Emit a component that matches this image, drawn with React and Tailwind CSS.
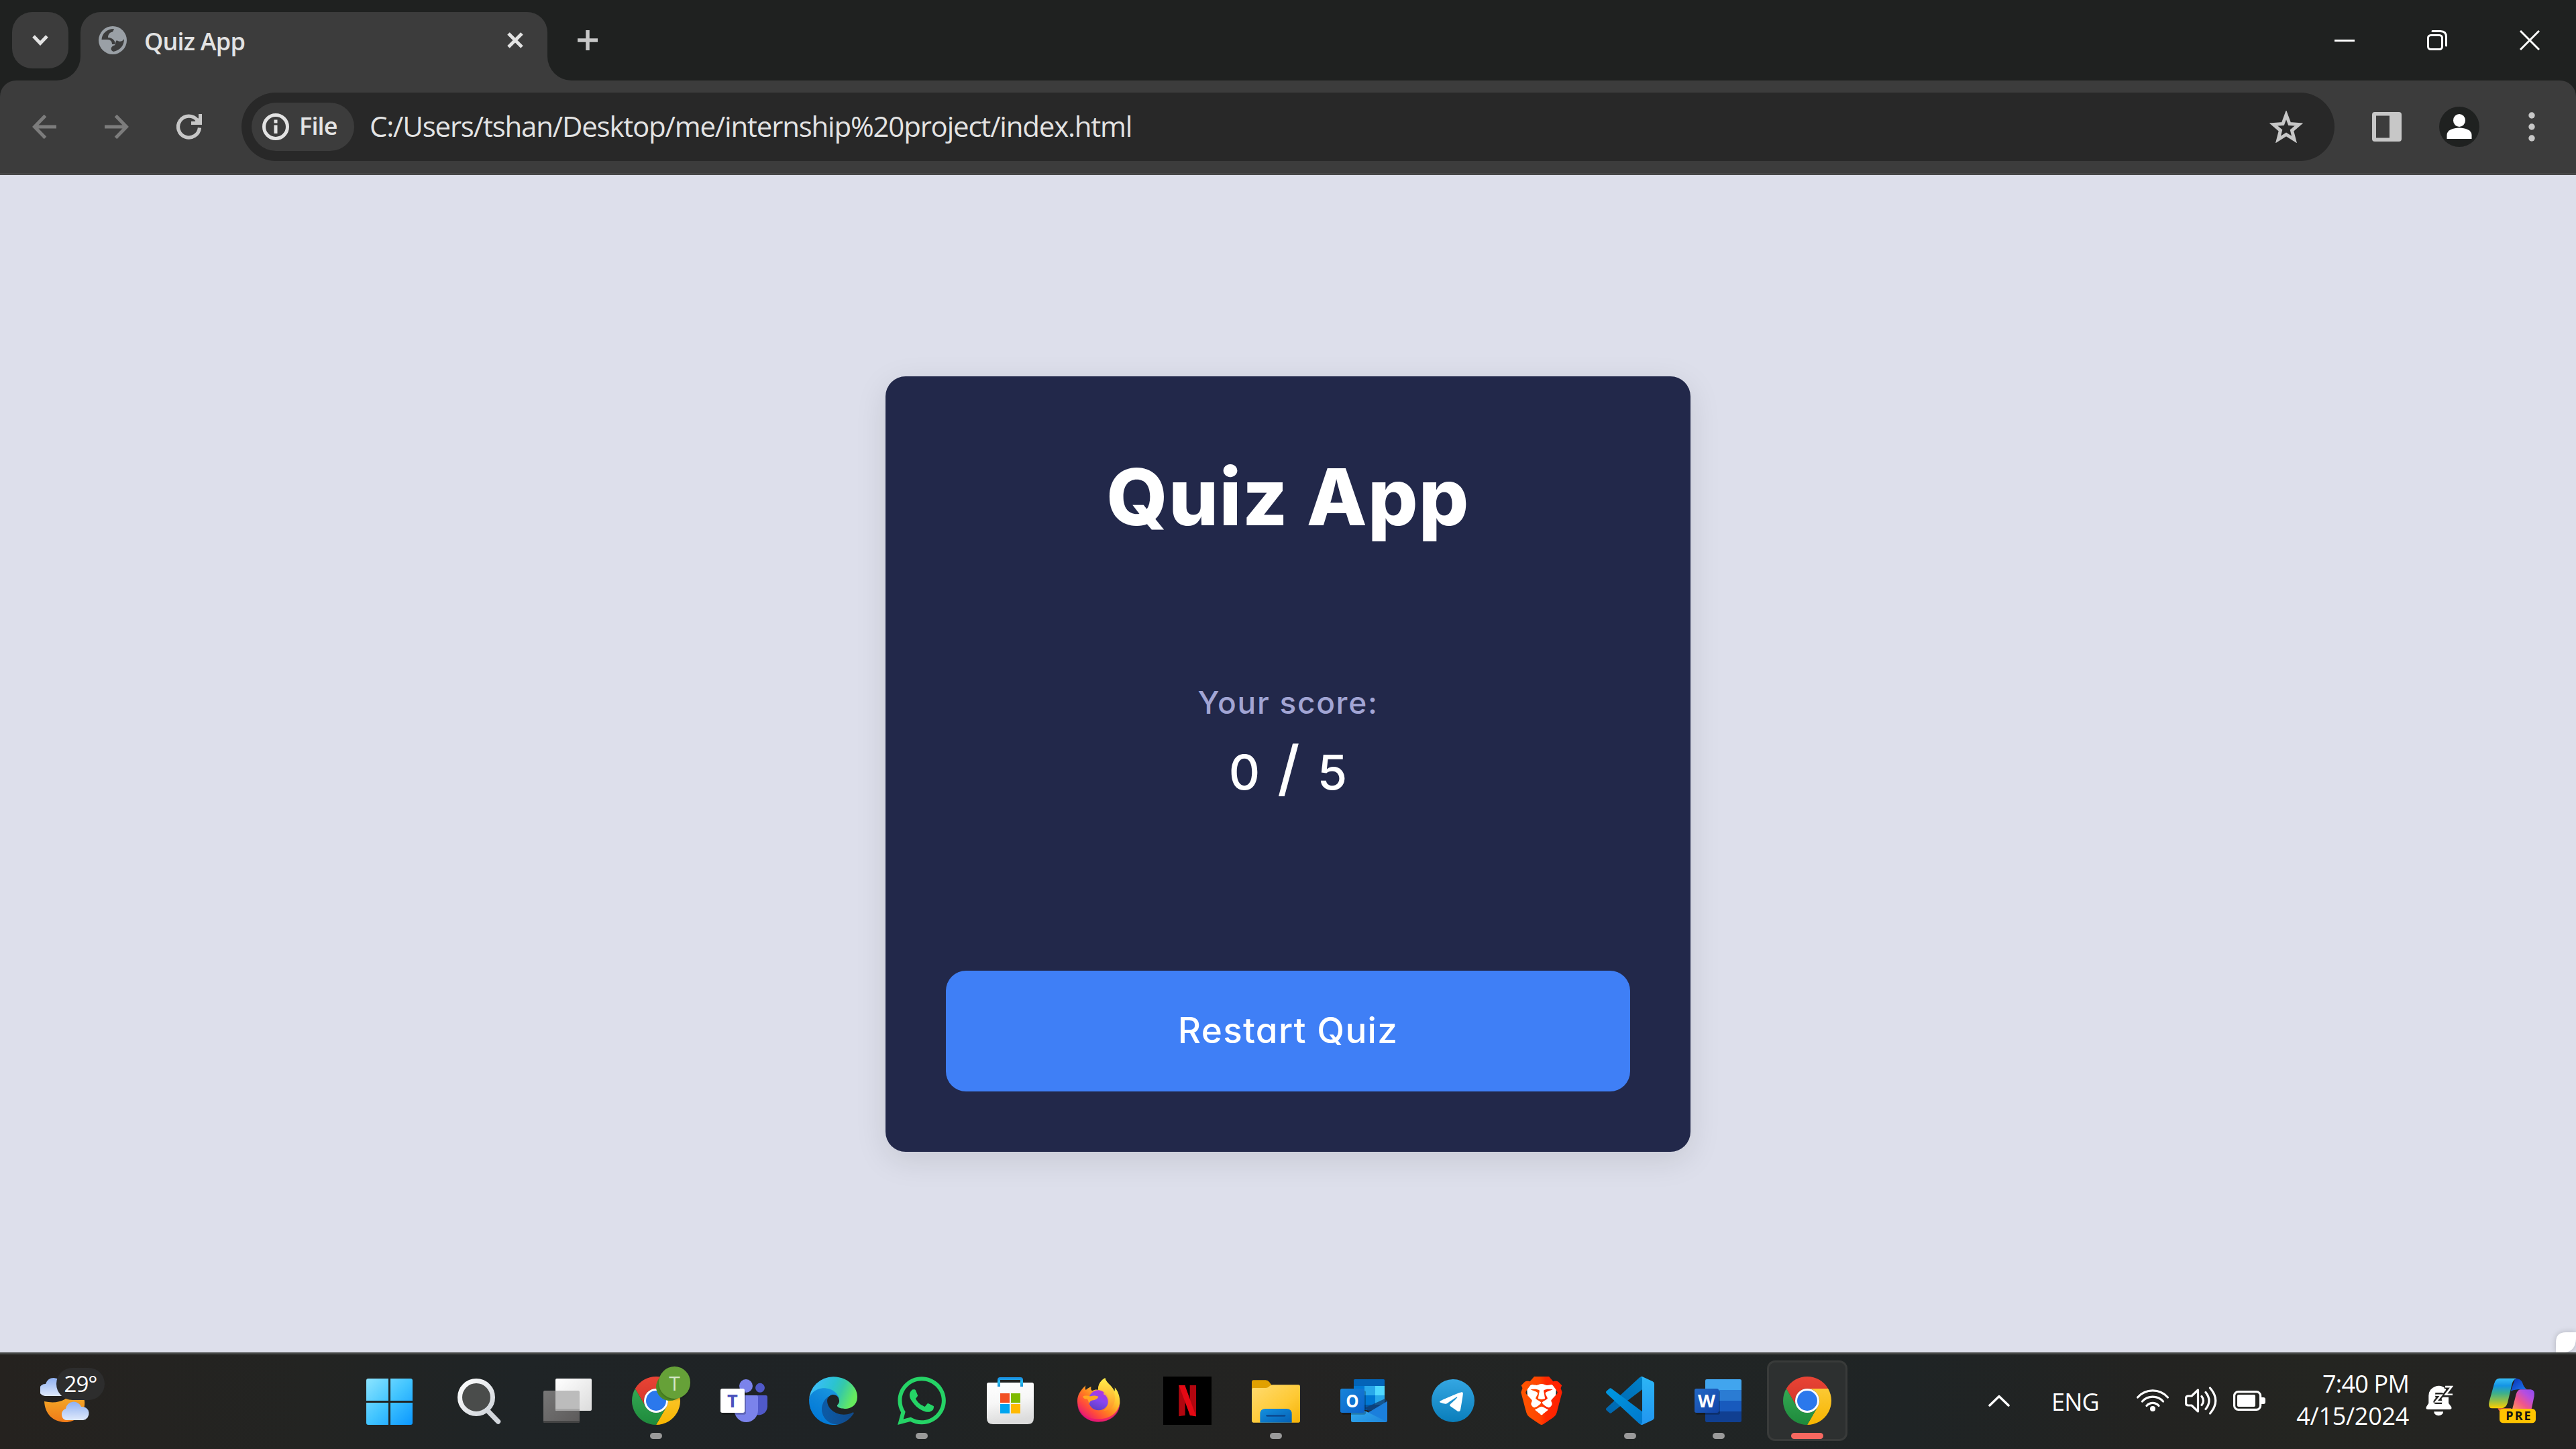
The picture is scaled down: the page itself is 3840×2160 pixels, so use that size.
import React from "react";
import { SiBrave, SiTelegram } from "react-icons/si";
import { FaWhatsapp } from "react-icons/fa";

function ChromeIcon() {
  return (
    <svg viewBox="0 0 216 216" className="size-[72px]">
      <defs>
        <linearGradient id="chR" x1="0" y1="0" x2="0" y2="1"><stop offset="0" stopColor="#e94435" /><stop offset="1" stopColor="#d3352a" /></linearGradient>
        <linearGradient id="chY" x1="0" y1="0" x2="0" y2="1"><stop offset="0" stopColor="#fbc934" /><stop offset="1" stopColor="#f8b500" /></linearGradient>
        <linearGradient id="chG" x1="0" y1="0" x2="0" y2="1"><stop offset="0" stopColor="#34a853" /><stop offset="1" stopColor="#1e8a3c" /></linearGradient>
      </defs>
      <path fill="url(#chR)" d="M14.500 54A108 108 0 0 1 201.500 54L108 54A54 54 0 0 0 61.200 135Z" />
      <path fill="url(#chY)" d="M201.500 54A108 108 0 0 1 108 216L154.800 135A54 54 0 0 0 108 54Z" />
      <path fill="url(#chG)" d="M108 216A108 108 0 0 1 14.500 54L61.200 135A54 54 0 0 0 154.800 135Z" />
      <circle cx="108" cy="108" r="54" fill="#fff" />
      <circle cx="108" cy="108" r="45" fill="#2b78ec" />
    </svg>
  );
}

function StartIcon() {
  return (
    <svg viewBox="0 0 72 72" className="size-[72px]">
      <defs>
        <linearGradient id="st" gradientUnits="userSpaceOnUse" x1="0" y1="3" x2="69" y2="72"><stop offset="0" stopColor="#8be4ff" /><stop offset=".5" stopColor="#41c4ff" /><stop offset="1" stopColor="#0a97ff" /></linearGradient>
      </defs>
      <path fill="url(#st)" d="M2 3H32V36H-1V6Q-1 3 2 3ZM35 3H65Q68 3 68 6V36H35ZM-1 39H32V72H2Q-1 72 -1 69ZM35 39H68V69Q68 72 65 72H35Z" transform="translate(1 0)" />
    </svg>
  );
}

function SearchIcon() {
  return (
    <svg viewBox="0 0 72 72" className="size-[72px]">
      <defs>
        <linearGradient id="se" x1="0" y1="0" x2="1" y2="1"><stop offset="0" stopColor="#fff" /><stop offset="1" stopColor="#cfd4da" /></linearGradient>
      </defs>
      <path d="M50 52L64.500 67" stroke="#d3d7dc" strokeWidth="7.500" strokeLinecap="round" />
      <circle cx="32" cy="31" r="24.500" fill="#4a4c4b" stroke="url(#se)" strokeWidth="7" />
    </svg>
  );
}

function TaskViewIcon() {
  return (
    <svg viewBox="0 0 72 72" className="size-[72px]">
      <defs>
        <linearGradient id="tv" x1="0" y1="0" x2="1" y2="1"><stop offset="0" stopColor="#fff" /><stop offset="1" stopColor="#dcdcdc" /></linearGradient>
        <linearGradient id="tv2" x1="0" y1="0" x2="1" y2="1"><stop offset="0" stopColor="#777" /><stop offset="1" stopColor="#5c5a5a" /></linearGradient>
      </defs>
      <rect x="0" y="21" width="54" height="48" rx="2" fill="url(#tv2)" />
      <path d="M0 66H54V67Q54 69 52 69H2Q0 69 0 67Z" fill="#444" />
      <rect x="18" y="3" width="54" height="48" rx="2" fill="url(#tv)" />
      <path d="M18 21H52Q54 21 54 23V51H20Q18 51 18 49Z" fill="#bcbcbc" />
      <path d="M18 48H54V51H20Q18 51 18 49Z" fill="#a6a6a6" />
    </svg>
  );
}

function TeamsIcon() {
  return (
    <svg viewBox="0 0 216 216" className="size-[72px]">
      <circle cx="177" cy="50.500" r="21" fill="#5059c9" />
      <path d="M150 84H203Q210 84 210 91V135A39 39 0 0 1 150 166Z" fill="#5059c9" />
      <circle cx="114" cy="42" r="30" fill="#7b83eb" />
      <path d="M62 84H161Q168 84 168 91V151A53 53 0 0 1 62 151Z" fill="#7b83eb" />
      <rect x="6" y="62" width="108" height="108" rx="8" fill="#000" opacity=".22" />
      <rect x="0" y="54" width="108" height="108" rx="8" fill="#fff" />
      <text x="54" y="138" textAnchor="middle" fontSize="82" className="font-['Open_Sans'] font-bold" fill="#4b53bc">T</text>
    </svg>
  );
}

function EdgeIcon() {
  return (
    <svg viewBox="0 0 256 256" className="size-[72px]">
      <defs>
        <linearGradient id="ed1" x1=".2" y1=".5" x2="1" y2=".6"><stop offset="0" stopColor="#0c59a4" /><stop offset="1" stopColor="#114a8b" /></linearGradient>
        <linearGradient id="ed2" x1=".9" y1="0" x2=".4" y2="1"><stop offset="0" stopColor="#1b9de2" /><stop offset=".5" stopColor="#0f86da" /><stop offset="1" stopColor="#0078d7" /></linearGradient>
        <linearGradient id="ed3" x1="0" y1=".3" x2="1" y2=".6"><stop offset="0" stopColor="#3fbcff" /><stop offset=".45" stopColor="#2bc3d2" /><stop offset=".65" stopColor="#36c9a8" /><stop offset=".95" stopColor="#66eb5e" /></linearGradient>
      </defs>
      <path fill="url(#ed1)" d="M231.060 190.540c-3.400 1.800-6.900 3.360-10.500 4.700a101.900 101.900 0 0 1-35.920 6.480c-47.300 0-88.520-32.500-88.520-74.270.1-11.400 6.400-21.900 16.400-27.300-42.800 1.800-53.800 46.400-53.800 72.500 0 74 68.100 81.400 82.800 81.400 7.900 0 19.800-2.300 27-4.600l1.300-.4a128.300 128.300 0 0 0 66.600-52.800 4 4 0 0 0-5.300-5.800z" />
      <path fill="url(#ed2)" d="M105.730 241.420a79.200 79.200 0 0 1-22.740-21.340 80.720 80.720 0 0 1 29.530-120c3.200-1.500 8.600-4.100 15.800-4a32.400 32.400 0 0 1 25.700 13 31.900 31.900 0 0 1 6.300 18.700c0-.2 24.500-79.600-80-79.600-43.900 0-80 41.700-80 78.200-.2 19.300 4 38.500 12.100 56 27.600 58.800 94.800 87.600 156.400 67.100-21.100 6.600-44.100 3.700-63-8z" />
      <path fill="url(#ed3)" d="M152.330 148.860c-.9 1-3.400 2.500-3.400 5.600 0 2.600 1.700 5.200 4.800 7.300 14.300 10 41.400 8.600 41.500 8.600 10.700 0 21.100-2.900 30.300-8.300a61.200 61.200 0 0 0 30.400-52.900c.3-22.400-8-37.300-11.300-43.900C223.230 24.760 177.730.86 128.230.86A128 128 0 0 0 .23 127c.5-36.500 36.800-66 80-66 3.500 0 23.500.3 42 10.100 16.300 8.600 24.900 18.900 30.800 29.200 6.200 10.700 7.300 24.100 7.300 29.500s-2.700 13.300-8 19z" />
    </svg>
  );
}

function StoreIcon() {
  return (
    <svg viewBox="0 0 216 216" className="size-[72px]">
      <defs>
        <linearGradient id="bag" x1="0" y1="0" x2=".2" y2="1"><stop offset="0" stopColor="#fff" /><stop offset=".5" stopColor="#f7f7f7" /><stop offset="1" stopColor="#dcdcdc" /></linearGradient>
        <linearGradient id="hnd" x1="0" y1="0" x2="0" y2="1"><stop offset="0" stopColor="#1a94e6" /><stop offset=".4" stopColor="#2ac2f5" /><stop offset="1" stopColor="#1690d4" /></linearGradient>
      </defs>
      <path d="M3 35Q3 27 11 27H205Q213 27 213 35V185Q213 213 185 213H31Q3 213 3 185Z" fill="url(#bag)" />
      <path d="M57 45V15Q57 9 63 9H153Q159 9 159 15V45" fill="none" stroke="url(#hnd)" strokeWidth="12" />
      <path d="M63 75h42v42h-42z" fill="#f25022" />
      <path d="M111 75h42v42h-42z" fill="#7fba00" />
      <path d="M63 123h42v42h-42z" fill="#00a4ef" />
      <path d="M111 123h42v42h-42z" fill="#ffb900" />
    </svg>
  );
}

function FirefoxIcon() {
  return (
    <svg viewBox="0 0 216 216" className="size-[72px]">
      <defs>
        <linearGradient id="ffb" x1=".85" y1=".1" x2=".15" y2=".95"><stop offset="0" stopColor="#fff44f" /><stop offset=".3" stopColor="#ffc22e" /><stop offset=".55" stopColor="#ff8020" /><stop offset=".75" stopColor="#ff4a3c" /><stop offset="1" stopColor="#e01080" /></linearGradient>
        <linearGradient id="ffp" x1=".7" y1="0" x2=".3" y2="1"><stop offset="0" stopColor="#b833e1" /><stop offset=".5" stopColor="#8646f0" /><stop offset="1" stopColor="#5b3fc0" /></linearGradient>
        <linearGradient id="fft" x1=".5" y1="0" x2=".5" y2="1"><stop offset="0" stopColor="#fff04c" /><stop offset=".6" stopColor="#ffb935" /><stop offset="1" stopColor="#ff8a2a" /></linearGradient>
      </defs>
      <path fill="url(#ffb)" d="M49 40C46 50 47 56 50 60C56 54 65 48 74 45C71 54 73 60 78 64C88 58 96 58 105 59C103 35 118 16 136 7C142 30 166 38 178 66C180 60 180 55 179 49C195 66 203 92 202 118C198 168 158 202 107 202C52 202 12 160 12 110C12 80 28 60 49 40Z" />
      <path fill="#e5127a" opacity=".75" d="M13 122C22 170 60 190 107 190C154 190 192 166 201 122C203 168 158 203 107 203C58 203 12 168 13 122Z" />
      <circle cx="107" cy="106" r="45" fill="url(#ffp)" />
      <path fill="url(#fft)" d="M128 78C138 72 122 62 105 59C106 35 118 16 136 7C142 34 180 48 180 96C180 130 160 152 128 154C152 140 156 104 138 84Z" opacity=".85" />
      <path fill="#ffa722" d="M36 90C44 82 60 86 72 88C84 84 98 86 106 90C104 98 96 102 86 106C72 106 64 114 66 124C60 112 62 104 54 100C44 102 40 96 36 90Z" />
    </svg>
  );
}

function NetflixIcon() {
  return (
    <svg viewBox="0 0 216 216" className="size-[72px]">
      <rect width="216" height="216" fill="#000" />
      <path d="M70 39H98V174Q84 175 70 178Z" fill="#b1060f" />
      <path d="M119 39H147V178Q133 175 119 174Z" fill="#b1060f" />
      <path d="M70 39H97L147 178Q134 175 120 174Z" fill="#e50914" />
    </svg>
  );
}

function FolderIcon() {
  return (
    <svg viewBox="0 0 216 216" className="size-[72px]">
      <defs>
        <linearGradient id="fo" x1="0" y1="0" x2="1" y2="1"><stop offset="0" stopColor="#ffdb70" /><stop offset=".6" stopColor="#fec934" /><stop offset="1" stopColor="#f5b206" /></linearGradient>
        <linearGradient id="fo2" x1="0" y1="0" x2="1" y2="1"><stop offset="0" stopColor="#1490df" /><stop offset="1" stopColor="#0560b4" /></linearGradient>
      </defs>
      <path d="M0 24Q0 16 8 16H62Q72 16 78 24L90 40V70H0Z" fill="#e0a000" />
      <path d="M0 58Q0 51 7 51H62C78 51 80 37 94 37H209Q216 37 216 44V199Q216 206 209 206H7Q0 206 0 199Z" fill="url(#fo)" />
      <path d="M37 206V168Q37 144 61 144H155Q179 144 179 168V206Z" fill="url(#fo2)" />
      <path d="M68 175H147" stroke="#0b4c93" strokeWidth="8" strokeLinecap="round" />
    </svg>
  );
}

function OutlookIcon() {
  return (
    <svg viewBox="0 0 216 216" className="size-[72px]">
      <defs>
        <linearGradient id="ol" x1="0" y1="0" x2="1" y2="1"><stop offset="0" stopColor="#1784d9" /><stop offset="1" stopColor="#0c63cb" /></linearGradient>
        <linearGradient id="ol2" x1="0" y1="0" x2="1" y2="1"><stop offset="0" stopColor="#35b2f0" /><stop offset="1" stopColor="#1f86dc" /></linearGradient>
      </defs>
      <path d="M60 19Q60 12 67 12H191Q198 12 198 19V150H60Z" fill="#0358a7" />
      <path d="M60 19Q60 12 67 12H191Q198 12 198 19V42H60Z" fill="#0364b8" />
      <path d="M60 42h48v84h-48zM108 84h48v42h-48z" fill="#0078d4" />
      <path d="M108 42h48v42h-48zM156 84h42v42h-42z" fill="#28a8ea" />
      <path d="M156 42h42v42h-42z" fill="#50d9ff" />
      <path d="M198 100L210 108V120L130 160L110 140Z" fill="#123b6d" opacity=".75" />
      <path d="M210 110V197Q210 204 203 204H110L100 176Z" fill="#1b7fdc" />
      <path d="M48 122L207 202Q205 204 202 204H55Q48 204 48 197Z" fill="url(#ol2)" />
      <rect x="6" y="62" width="108" height="108" rx="8" fill="#000" opacity=".25" />
      <rect x="0" y="54" width="108" height="108" rx="8" fill="url(#ol)" />
      <text x="54" y="138" textAnchor="middle" fontSize="82" textLength="58" lengthAdjust="spacingAndGlyphs" className="font-['Open_Sans'] font-bold" fill="#fff">O</text>
    </svg>
  );
}

function WordIcon() {
  return (
    <svg viewBox="0 0 216 216" className="size-[72px]">
      <defs>
        <linearGradient id="wd" x1="0" y1="0" x2="1" y2="1"><stop offset="0" stopColor="#2368c4" /><stop offset="1" stopColor="#1244a8" /></linearGradient>
      </defs>
      <path d="M48 60V19Q48 12 55 12H203Q210 12 210 19V60Z" fill="#41a5ee" />
      <path d="M48 60h162v48h-162z" fill="#2b7cd3" />
      <path d="M48 108h162v48h-162z" fill="#185abd" />
      <path d="M48 156H210V197Q210 204 203 204H55Q48 204 48 197Z" fill="#103f91" />
      <rect x="6" y="62" width="108" height="108" rx="8" fill="#000" opacity=".25" />
      <rect x="0" y="54" width="108" height="108" rx="8" fill="url(#wd)" />
      <text x="54" y="138" textAnchor="middle" fontSize="80" textLength="78" lengthAdjust="spacingAndGlyphs" className="font-['Open_Sans'] font-bold" fill="#fff">W</text>
    </svg>
  );
}

function CodeIcon() {
  return (
    <svg viewBox="0 0 216 216" className="size-[72px]">
      <defs>
        <linearGradient id="vs" x1="0" y1="0" x2="0" y2="1"><stop offset="0" stopColor="#2cb5f6" /><stop offset="1" stopColor="#2196f0" /></linearGradient>
        <linearGradient id="vs2" x1="0" y1="1" x2="1" y2="0"><stop offset="0" stopColor="#0065ad" /><stop offset="1" stopColor="#0080c8" /></linearGradient>
        <linearGradient id="vs3" x1="0" y1="0" x2="1" y2="1"><stop offset="0" stopColor="#0098e0" /><stop offset="1" stopColor="#0078cc" /></linearGradient>
      </defs>
      <path d="M2 141L148 6Q154 0 162 0V58L24 163Q20 166 16 163L2 151Q-2 146 2 141Z" fill="url(#vs2)" />
      <path d="M2 75Q-2 70 2 65L16 53Q20 50 24 53L162 157V216Q154 216 148 210Z" fill="url(#vs3)" />
      <path d="M162 0L209 22Q216 26 216 33V183Q216 190 209 194L162 216Q158 216 156 214Q162 210 162 205V10Q162 5 156 1.500Q158 0 162 0Z" fill="url(#vs)" />
    </svg>
  );
}

function BraveIcon() {
  return (
    <span className="relative flex size-[72px] items-center justify-center">
      <svg viewBox="0 0 72 72" className="absolute size-[72px]">
        <defs>
          <linearGradient id="br" x1="0" y1="0" x2="1" y2="0"><stop offset="0" stopColor="#ff5500" /><stop offset=".45" stopColor="#ff4500" /><stop offset=".6" stopColor="#ff2800" /><stop offset="1" stopColor="#ff2000" /></linearGradient>
          <linearGradient id="tg" x1="0" y1="0" x2="0" y2="1"><stop offset="0" stopColor="#34a6e2" /><stop offset="1" stopColor="#0a7ebb" /></linearGradient>
        </defs>
        <path d="M14 14L36 8L58 14L56 46L36 62L16 46Z" fill="#fff" />
      </svg>
      <SiBrave className="relative size-[72px]" fill="url(#br)" />
    </span>
  );
}

function TelegramIcon() {
  return (
    <span className="flex size-[64px] items-center justify-center rounded-full bg-[radial-gradient(circle,#fff_55%,transparent_56%)]">
      <SiTelegram className="size-[64px]" fill="url(#tg)" />
    </span>
  );
}

function Dot() {
  return <span className="absolute bottom-3 h-[9px] w-[18px] rounded-full bg-[#9a9a9a]" />;
}

const APPS = [
  { id: "start", icon: <StartIcon /> },
  { id: "search", icon: <SearchIcon /> },
  { id: "tasks", icon: <TaskViewIcon /> },
  { id: "chrome-profile", icon: <ChromeIcon />, running: true, badge: true },
  { id: "teams", icon: <TeamsIcon /> },
  { id: "edge", icon: <EdgeIcon /> },
  { id: "whatsapp", icon: <FaWhatsapp className="size-[82px] shrink-0 text-[#25d366]" />, running: true },
  { id: "store", icon: <StoreIcon /> },
  { id: "firefox", icon: <FirefoxIcon /> },
  { id: "netflix", icon: <NetflixIcon /> },
  { id: "files", icon: <FolderIcon />, running: true },
  { id: "outlook", icon: <OutlookIcon /> },
  { id: "telegram", icon: <TelegramIcon /> },
  { id: "brave", icon: <BraveIcon /> },
  { id: "code", icon: <CodeIcon />, running: true },
  { id: "word", icon: <WordIcon />, running: true },
];

function TitleBar() {
  return (
    <div className="flex h-[120px] shrink-0 bg-[#1f2120] text-[#e3e3e3]">
      <div className="ml-[18px] mt-[18px] flex size-[84px] items-center justify-center rounded-[30px] bg-[#3c3c3c]">
        <svg viewBox="0 0 24 16" className="h-4 w-6"><path d="M2 2L12 12.500L22 2" fill="none" stroke="currentColor" strokeWidth="5" /></svg>
      </div>
      <div className="relative ml-[18px] mt-[18px] flex h-[102px] w-[696px] rounded-t-[30px] bg-[#3c3c3c]">
        <svg viewBox="0 0 36 36" className="absolute -left-9 bottom-0 size-9"><path d="M36 0V36H0A36 36 0 0 0 36 0Z" fill="#3c3c3c" /></svg>
        <svg viewBox="0 0 36 36" className="absolute -right-9 bottom-0 size-9"><path d="M0 0V36H36A36 36 0 0 1 0 0Z" fill="#3c3c3c" /></svg>
        <div className="flex h-[84px] w-full items-center">
          <svg viewBox="0 0 42 42" className="ml-[27px] size-[42px]">
            <circle cx="21" cy="21" r="21" fill="#9aa0a6" />
            <path d="M23 4C12 4 5 11 4.500 20H13C18 20 20 23 20 27H24C26 23 21 17 14 17C14 13 16 10 19 9C21 9 22 7 23 4Z" fill="#3c3c3c" />
            <path d="M38 19C38 29 32 36 22 38C17 36 18 31 22 29C26 29 24 24 27 21C31 24 36 23 38 19Z" fill="#3c3c3c" />
          </svg>
          <span className="ml-[26px] whitespace-nowrap pt-1 text-[36px] font-semibold leading-[48px] tracking-[-0.8px]">Quiz App</span>
          <svg viewBox="0 0 24 24" className="ml-auto mr-9 size-6"><path d="M2 2L22 22M22 2L2 22" stroke="currentColor" strokeWidth="5" /></svg>
        </div>
      </div>
      <svg viewBox="0 0 30 30" className="ml-[45px] mt-[45px] size-[30px]"><path d="M15 0V30M0 15H30" stroke="#c7c7c7" strokeWidth="5.500" /></svg>
      <div className="ml-auto mr-[54px] mt-[45px] flex gap-[108px] text-white">
        <svg viewBox="0 0 30 30" className="size-[30px]"><path d="M0 15.500H30" stroke="currentColor" strokeWidth="3" /></svg>
        <svg viewBox="0 0 30 30" className="size-[30px]" fill="none" stroke="currentColor" strokeWidth="3"><rect x="1.500" y="7.500" width="21" height="21" rx="4" /><path d="M8 1.500H20Q28.500 1.500 28.500 10V23" strokeLinecap="round" /></svg>
        <svg viewBox="0 0 30 30" className="size-[30px]"><path d="M1 1L29 29M29 1L1 29" stroke="currentColor" strokeWidth="3" /></svg>
      </div>
    </div>
  );
}

function Toolbar() {
  return (
    <div className="h-[141px] shrink-0 bg-[#1f2120]">
      <div className="flex h-full items-center rounded-t-3xl border-b-[3px] border-[#474747] bg-[#3c3c3c] text-[#c7c7c7]">
        <svg viewBox="0 0 36 36" className="ml-12 size-9"><path d="M36 18H4M19.500 1.500L3.500 18L19.500 34.500" fill="none" stroke="#7c7c7c" strokeWidth="5" /></svg>
        <svg viewBox="0 0 36 36" className="ml-[72px] size-9"><path d="M0 18H32M16.500 1.500L32.500 18L16.500 34.500" fill="none" stroke="#7c7c7c" strokeWidth="5" /></svg>
        <svg viewBox="0 0 38 38" className="ml-[71px] size-[38px]"><path d="M34.500 20.500A16 16 0 1 1 31 9L34 12.500" fill="none" stroke="currentColor" strokeWidth="5.300" /><path d="M38 0V16H22V11H27.500L33 6V0Z" fill="currentColor" /></svg>
        <div className="ml-[59px] flex h-[102px] w-[3120px] items-center rounded-full bg-[#282828] pl-[15px] pr-[47px] text-[#e3e3e3]">
          <div className="flex h-[72px] w-[153px] items-center rounded-full bg-[#3c3c3c] pl-4">
            <svg viewBox="0 0 40 40" className="size-10"><circle cx="20" cy="20" r="17.500" fill="none" stroke="currentColor" strokeWidth="5" /><path d="M20 17.500V30M20 9.500V14.500" stroke="currentColor" strokeWidth="5" /></svg>
            <span className="ml-[15px] whitespace-nowrap pb-0.5 text-[36px] font-semibold leading-[48px] tracking-[-0.8px]">File</span>
          </div>
          <span className="ml-[23px] whitespace-nowrap pb-0.5 text-[42px] leading-[56px] tracking-[-1.2px]">C:/Users/tshan/Desktop/me/internship%20project/index.html</span>
          <svg viewBox="0 0 50 48" className="ml-auto h-12 w-[50px]"><path d="M25 6L30 19.500L44 20.500L33.500 29.500L37 43L25 35.500L13 43L16.500 29.500L6 20.500L20 19.500Z" fill="none" stroke="#c7c7c7" strokeWidth="5" /></svg>
        </div>
        <svg viewBox="0 0 44 44" className="ml-14 size-11"><path fillRule="evenodd" d="M4 0H40Q44 0 44 4V40Q44 44 40 44H4Q0 44 0 40V4Q0 0 4 0ZM6 5.500V38.500H26V5.500Z" fill="currentColor" /></svg>
        <div className="ml-14 flex size-[60px] items-center justify-center rounded-full bg-[#1f2120]">
          <svg viewBox="0 0 38 38" className="size-[38px] text-white"><ellipse cx="19" cy="9.500" rx="9" ry="9.500" fill="currentColor" /><path d="M0.500 37V31C0.500 24 10 20.500 19 20.500S37.500 24 37.500 31V37Z" fill="currentColor" /></svg>
        </div>
        <svg viewBox="0 0 10 44" className="ml-[73px] h-11 w-2.5" fill="currentColor"><circle cx="5" cy="5" r="4.700" /><circle cx="5" cy="22" r="4.700" /><circle cx="5" cy="39" r="4.700" /></svg>
      </div>
    </div>
  );
}

function QuizPage() {
  return (
    <div className="relative flex h-[1755px] shrink-0 flex-col items-center bg-[#dddfeb] pt-[300px]">
      <div className="flex h-[1156px] w-[1200px] flex-col items-center rounded-[30px] bg-[#22284a] px-[90px] pb-[90px] pt-[90px] font-['Inter',sans-serif] shadow-[0_12px_48px_rgba(0,0,0,0.1)] [font-feature-settings:'cv11']">
        <h1 className="text-[117px] font-extrabold leading-[180px] tracking-[1.2px] text-white">Quiz App</h1>
        <p className="mt-[180px] text-[46px] font-medium leading-[72px] tracking-[1.7px] text-[#a2a5d4]">Your score:</p>
        <p className="mt-[14px] flex h-[108px] items-baseline gap-[26px] text-[72px] font-medium leading-[108px] text-white">
          <span>0</span>
          <span className="text-[90px] leading-[80px]">/</span>
          <span>5</span>
        </p>
        <button className="mt-auto h-[180px] w-full rounded-[30px] bg-[#3f7ff6] text-[53px] font-medium tracking-[1.3px] text-white">Restart Quiz</button>
      </div>
      <svg viewBox="0 0 30 30" className="absolute bottom-0 right-0 size-[30px] drop-shadow-[0_0_4px_rgba(0,0,0,0.2)]"><path d="M0 30V15Q0 0 15 0H30V10Q29 28 14 30Z" fill="#fff" /></svg>
    </div>
  );
}

function Weather() {
  return (
    <div className="relative ml-[60px] h-[84px] w-[96px]">
      <svg viewBox="0 0 96 84" className="size-full">
        <defs>
          <linearGradient id="cl" x1="0" y1="0" x2="0" y2="1"><stop offset="0" stopColor="#8fb1f2" /><stop offset="1" stopColor="#dfe9fb" /></linearGradient>
          <linearGradient id="mo" x1="0" y1="0" x2="0" y2="1"><stop offset="0" stopColor="#f4b62c" /><stop offset="1" stopColor="#f07a18" /></linearGradient>
        </defs>
        <path d="M7 42A9 9 0 0 1 8 24Q11 15 20 15T34 26V42Z" fill="url(#cl)" />
        <path d="M48 32C60 34 68 44 66 56C64 72 50 82 36 81C18 80 7 68 6 50C24 54 42 50 48 32Z" fill="url(#mo)" />
        <path d="M38 78A9 9 0 0 1 38 61A12 12 0 0 1 61 58A10 10 0 0 1 64 78Z" fill="url(#cl)" />
      </svg>
      <div className="absolute left-6 top-0 flex h-12 w-[72px] items-center justify-center rounded-3xl bg-[#2d2d2d]">
        <span className="text-[33px] leading-[40px] tracking-[-1px] text-white">29°</span>
      </div>
    </div>
  );
}

function Taskbar() {
  return (
    <div className="flex h-[144px] shrink-0 items-center border-t-[3px] border-[#454745] bg-[linear-gradient(90deg,#25221f_0%,#232422_12%,#1f2426_20%,#1f2325_34%,#222422_42%,#242322_50%,#222524_60%,#1f2425_74%,#232321_84%,#242521_90%,#242322_100%)] pb-[3px] text-white">
      <div className="-mt-[15px]"><Weather /></div>
      <div className="ml-[360px] flex h-full">
        {APPS.map((app) => (
          <div key={app.id} className="relative flex h-full w-[132px] items-center justify-center">
            {app.icon}
            {app.badge && (
              <>
                <span className="absolute left-[66px] top-[28px] size-[41px] rounded-full bg-[#4d8a24]" />
                <span className="absolute left-[70px] top-[18px] flex h-12 w-[47px] items-center justify-center rounded-full bg-[#66a138] text-[30px] text-[#d5e6c8] shadow-[0_2px_3px_rgba(0,0,0,0.2)]">T</span>
              </>
            )}
            {app.running && <Dot />}
          </div>
        ))}
        <div className="relative flex h-full w-[132px] items-center justify-center">
          <div className="flex size-[120px] items-center justify-center rounded-xl border-[3px] border-[#393b3a] bg-[#2d3030]"><ChromeIcon /></div>
          <span className="absolute bottom-3 h-[9px] w-12 rounded-full bg-[#f76860]" />
        </div>
      </div>
      <svg viewBox="0 0 32 18" className="ml-[204px] h-[18px] w-8"><path d="M2 16L16 2.500L30 16" fill="none" stroke="currentColor" strokeWidth="3.500" strokeLinecap="round" strokeLinejoin="round" /></svg>
      <span className="ml-[62px] pt-1 text-[36px] leading-[48px] tracking-[-0.8px]">ENG</span>
      <svg viewBox="0 0 48 38" className="-mt-0.5 ml-auto h-[38px] w-12" fill="none" stroke="currentColor" strokeWidth="3.200" strokeLinecap="round"><path d="M1.600 15A30 30 0 0 1 46.400 15M8.500 21A21 21 0 0 1 39.500 21M15 27.500A12 12 0 0 1 33 27.500" /><circle cx="24" cy="32" r="4" fill="currentColor" stroke="none" /></svg>
      <svg viewBox="0 0 48 42" className="ml-6 h-[42px] w-12" fill="none" stroke="currentColor" strokeWidth="3.200" strokeLinecap="round" strokeLinejoin="round"><path d="M1.600 17Q1.600 14 5 14H10L19.500 5V37L10 28H5Q1.600 28 1.600 25ZM25 14.500Q30 21 25 27.500M31 8.500Q41 21 31 33.500M37.500 2Q54 21 37.500 40" /></svg>
      <svg viewBox="0 0 48 30" className="ml-6 h-[30px] w-12"><rect x="1.600" y="1.600" width="39" height="26.800" rx="6" fill="none" stroke="currentColor" strokeWidth="3.200" /><rect x="6" y="6" width="27" height="18" rx="2" fill="currentColor" /><path d="M42 10H45Q48 10 48 13V17Q48 20 45 20H42Z" fill="currentColor" /></svg>
      <div className="-mt-0.5 ml-11 flex w-[170px] flex-col items-end whitespace-nowrap text-[36px] leading-[48px]">
        <span className="tracking-[-0.8px]">7:40 PM</span>
        <span className="tracking-[-0.3px]">4/15/2024</span>
      </div>
      <svg viewBox="0 0 124 138" className="ml-[25px] h-[46px] w-[41px]">
        <path d="M3 96L13 80V46A45 45 0 0 1 90 16L103 50V80L115 96Q120 108 108 108H10Q-2 108 3 96ZM37 118H79A21 18 0 0 1 37 118Z" fill="#fff" />
        <path d="M84 4H118L88 42H120" fill="none" stroke="#232321" strokeWidth="22" />
        <path d="M43 44H70L46 73H73" fill="none" stroke="#232321" strokeWidth="22" strokeLinejoin="round" />
        <path d="M43 44H70L46 73H73M88 6H117L90 41H121" fill="none" stroke="#fff" strokeWidth="8" />
      </svg>
      <svg viewBox="0 0 216 216" className="ml-[53px] mr-[58px] size-[72px] shrink-0">
        <defs>
          <linearGradient id="cp1" x1="0" y1="0" x2="0" y2="1"><stop offset="0" stopColor="#38bdf8" /><stop offset=".25" stopColor="#1494e4" /><stop offset=".5" stopColor="#3cb08c" /><stop offset=".75" stopColor="#96bf45" /><stop offset="1" stopColor="#ffce00" /></linearGradient>
          <linearGradient id="cp2" x1="1" y1="0" x2="0" y2="1"><stop offset="0" stopColor="#8a4cf0" /><stop offset=".3" stopColor="#b64ee0" /><stop offset=".6" stopColor="#f0558c" /><stop offset="1" stopColor="#ff9a56" /></linearGradient>
          <linearGradient id="cp3" x1="0" y1="0" x2="1" y2="1"><stop offset="0" stopColor="#0a2fb4" /><stop offset="1" stopColor="#1d7cf2" /></linearGradient>
        </defs>
        <path d="M40 142H100V170H70Q50 165 40 142Z" fill="#f2663c" />
        <path d="M118 8Q142 8 150 26Q156 50 172 58H128Q108 60 98 66Z" fill="url(#cp3)" />
        <path d="M48 8H124Q110 12 104 32L84 118Q76 142 56 142H14Q-4 142 2 112L24 32Q30 8 48 8Z" fill="url(#cp1)" />
        <path d="M140 58H188Q208 60 203 88L190 150H104L122 80Q128 60 140 58Z" fill="url(#cp2)" />
        <rect x="48" y="144" width="162" height="64" rx="16" fill="#ffc400" />
        <text x="76" y="195" fontSize="54" textLength="112" className="font-['Open_Sans'] font-bold" fill="#111">PRE</text>
      </svg>
    </div>
  );
}

export default function App() {
  return (
    <div className="flex h-[2160px] w-[3840px] flex-col overflow-hidden font-['Open_Sans','Noto_Sans',sans-serif]">
      <TitleBar />
      <Toolbar />
      <QuizPage />
      <Taskbar />
    </div>
  );
}
